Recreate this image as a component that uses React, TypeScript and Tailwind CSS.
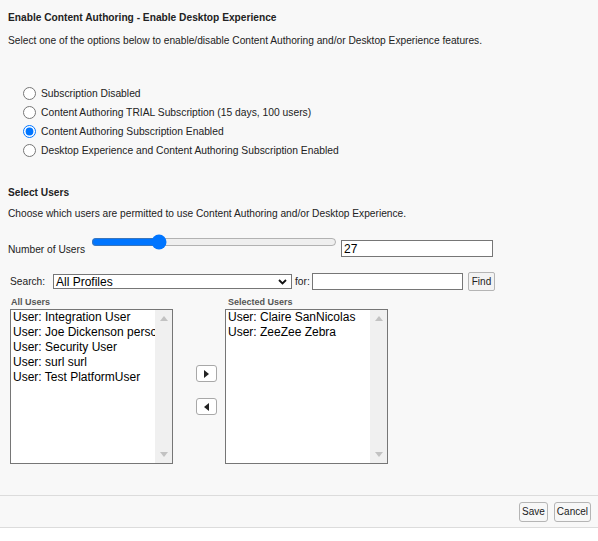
import { useState } from "react";

const options = [
  "Subscription Disabled",
  "Content Authoring TRIAL Subscription (15 days, 100 users)",
  "Content Authoring Subscription Enabled",
  "Desktop Experience and Content Authoring Subscription Enabled",
];

const allUsers = [
  "User: Integration User",
  "User: Joe Dickenson personal",
  "User: Security User",
  "User: surl surl",
  "User: Test PlatformUser",
];

const selectedUsers = ["User: Claire SanNicolas", "User: ZeeZee Zebra"];

function ListBox({ items }: { items: string[] }) {
  return (
    <div className="flex h-[155px] w-[163px] border border-[#767676] bg-white">
      <div className="min-w-0 flex-1 overflow-hidden pl-[2px] text-[12px] leading-[15px] text-black">
        {items.map((u) => (
          <div key={u} className="whitespace-nowrap">
            {u}
          </div>
        ))}
      </div>
      {/* fake disabled scrollbar */}
      <div className="flex w-[17px] flex-col items-center justify-between bg-[#f0f0f0] py-[6px]">
        <svg width="8" height="5" viewBox="0 0 8 5">
          <path d="M4 0L8 5H0z" fill="#c2c2c2" />
        </svg>
        <svg width="8" height="5" viewBox="0 0 8 5">
          <path d="M0 0H8L4 5z" fill="#c2c2c2" />
        </svg>
      </div>
    </div>
  );
}

function ArrowBtn({ dir }: { dir: "left" | "right" }) {
  return (
    <button className="flex h-[17px] w-[21px] items-center justify-center rounded-[3px] border border-[#a8a8a8] bg-white">
      <svg width="5" height="8" viewBox="0 0 5 8">
        {dir === "right" ? <path d="M0 0L5 4L0 8z" fill="#222" /> : <path d="M5 0L0 4L5 8z" fill="#222" />}
      </svg>
    </button>
  );
}

export default function App() {
  const [choice, setChoice] = useState(2);
  const [count, setCount] = useState(27);

  return (
    <div className="min-h-[541px] bg-white font-['Liberation_Sans',Arial,sans-serif] text-[10.2px] text-[#222]">
      <div className="bg-[#f8f8f8]">
        <div className="px-[8px] pt-[12px]">
          <h2 className="text-[10.2px] font-bold leading-[12px] text-[#222]">
            Enable Content Authoring - Enable Desktop Experience
          </h2>
          <p className="mt-[11px] leading-[12px]">
            Select one of the options below to enable/disable Content Authoring and/or Desktop Experience features.
          </p>

          {/* subscription options */}
          <div className="mt-[40px] flex flex-col gap-[6px] pl-[15px] text-[10.3px]">
            {options.map((o, i) => (
              <label key={o} className="flex h-[13px] items-center gap-[5px]">
                <input
                  type="radio"
                  name="sub"
                  checked={choice === i}
                  onChange={() => setChoice(i)}
                  className="m-0 h-[13px] w-[13px]"
                />
                <span className="leading-[12px]">{o}</span>
              </label>
            ))}
          </div>

          <h3 className="mt-[30px] text-[10.2px] font-bold leading-[12px]">Select Users</h3>
          <p className="mt-[9px] leading-[12px]">
            Choose which users are permitted to use Content Authoring and/or Desktop Experience.
          </p>

          {/* number of users */}
          <div className="mt-[14px] flex items-start">
            <span className="mt-[10px] w-[83px] leading-[12px]">Number of Users</span>
            <input
              type="range"
              min={1}
              max={101}
              value={count}
              onChange={(e) => setCount(Number(e.target.value))}
              className="m-0 h-[16px] w-[246px]"
            />
            <input
              type="text"
              value={count}
              onChange={(e) => setCount(Number(e.target.value) || 0)}
              className="mt-[6px] ml-[4px] h-[17px] w-[152px] border border-[#767676] bg-white px-[2px] text-[12px] leading-[15px] text-black outline-none"
            />
          </div>

          {/* search row */}
          <div className="mt-[15px] flex items-center pl-[2px]">
            <span className="w-[43px]">Search:</span>
            <div className="relative flex h-[15px] w-[239px] items-center border border-[#767676] bg-white pl-[2px] text-[12px] text-black">
              All Profiles
              <svg className="absolute right-[4px] top-[4px]" width="9" height="6" viewBox="0 0 9 6">
                <path d="M1 1L4.5 4.5L8 1" stroke="#111" strokeWidth="1.8" fill="none" />
              </svg>
            </div>
            <span className="ml-[3px] w-[16px]">for:</span>
            <input
              type="text"
              className="ml-[1px] h-[17px] w-[151px] border border-[#767676] bg-white outline-none"
            />
            <button className="ml-[5px] h-[19px] w-[27px] rounded-[2px] border border-[#b5b5b5] bg-[#f3f3f3] text-[10px] text-[#222]">
              Find
            </button>
          </div>

          {/* dual list */}
          <div className="mt-[4px] flex pl-[2px]">
            <div className="flex flex-col">
              <span className="pl-[1px] text-[9px] font-bold leading-[14px] text-[#555]">All Users</span>
              <ListBox items={allUsers} />
            </div>
            <div className="ml-[23px] mr-[8px] flex w-[21px] flex-col items-center gap-[16px] pt-[70px]">
              <ArrowBtn dir="right" />
              <ArrowBtn dir="left" />
            </div>
            <div className="flex flex-col">
              <span className="pl-[3px] text-[9px] font-bold leading-[14px] text-[#555]">Selected Users</span>
              <ListBox items={selectedUsers} />
            </div>
          </div>
        </div>

        {/* footer */}
        <div className="mt-[31px] flex h-[33px] items-center justify-end gap-[6px] border-t border-b border-[#dcdcdc] pr-[7px]">
          <button className="h-[20px] rounded-[3px] border border-[#b5b5b5] bg-[#f7f7f7] px-[2px] text-[10px] text-[#222]">
            Save
          </button>
          <button className="h-[20px] rounded-[3px] border border-[#b5b5b5] bg-[#f7f7f7] px-[2px] text-[10px] text-[#222]">
            Cancel
          </button>
        </div>
      </div>
    </div>
  );
}
